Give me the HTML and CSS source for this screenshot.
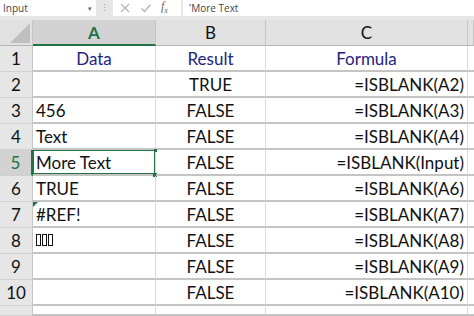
FILE: index.html
```html
<!DOCTYPE html>
<html lang="en">
<head>
  <meta charset="UTF-8">
  <meta name="viewport" content="width=device-width, initial-scale=1.0">
  <title>ISBLANK examples</title>
  <link rel="stylesheet" href="styles.css">
</head>
<body>
  <div class="formula-bar">
    <div class="name-box">
      <span>Input</span>
      <span class="caret">&#9662;</span>
    </div>
    <div class="grip">&#8942;</div>
    <div class="bar-buttons">
      <svg class="btn-icon" width="12" height="12" viewBox="0 0 12 12"><path d="M2 2 L10 10 M10 2 L2 10" stroke="#b3b3b3" stroke-width="1.2" fill="none"/></svg>
      <svg class="btn-icon" width="12" height="12" viewBox="0 0 12 12"><path d="M1.5 6.5 L4.5 9.5 L10.5 2.5" stroke="#b3b3b3" stroke-width="1.2" fill="none"/></svg>
      <span class="fx">f<sub>x</sub></span>
    </div>
    <div class="formula-input">'More Text</div>
  </div>

  <div class="sheet">
    <div class="corner"><span class="corner-tri"></span></div>
    <div class="col-head selected">A</div>
    <div class="col-head">B</div>
    <div class="col-head">C</div>
    <div class="col-head edge"></div>

    <div class="row-head">1</div>
    <div class="cell title">Data</div>
    <div class="cell title">Result</div>
    <div class="cell title">Formula</div>
    <div class="cell edge"></div>

    <div class="row-head">2</div>
    <div class="cell"></div>
    <div class="cell center">TRUE</div>
    <div class="cell right">=ISBLANK(A2)</div>
    <div class="cell edge"></div>

    <div class="row-head">3</div>
    <div class="cell">456</div>
    <div class="cell center">FALSE</div>
    <div class="cell right">=ISBLANK(A3)</div>
    <div class="cell edge"></div>

    <div class="row-head">4</div>
    <div class="cell">Text</div>
    <div class="cell center">FALSE</div>
    <div class="cell right">=ISBLANK(A4)</div>
    <div class="cell edge"></div>

    <div class="row-head selected">5</div>
    <div class="cell active">More Text<span class="handle top"></span><span class="handle"></span></div>
    <div class="cell center">FALSE</div>
    <div class="cell right">=ISBLANK(Input)</div>
    <div class="cell edge"></div>

    <div class="row-head">6</div>
    <div class="cell">TRUE</div>
    <div class="cell center">FALSE</div>
    <div class="cell right">=ISBLANK(A6)</div>
    <div class="cell edge"></div>

    <div class="row-head">7</div>
    <div class="cell flagged">#REF!</div>
    <div class="cell center">FALSE</div>
    <div class="cell right">=ISBLANK(A7)</div>
    <div class="cell edge"></div>

    <div class="row-head">8</div>
    <div class="cell"><span class="tofu"></span><span class="tofu"></span><span class="tofu"></span></div>
    <div class="cell center">FALSE</div>
    <div class="cell right">=ISBLANK(A8)</div>
    <div class="cell edge"></div>

    <div class="row-head">9</div>
    <div class="cell"></div>
    <div class="cell center">FALSE</div>
    <div class="cell right">=ISBLANK(A9)</div>
    <div class="cell edge"></div>

    <div class="row-head">10</div>
    <div class="cell"></div>
    <div class="cell center">FALSE</div>
    <div class="cell right">=ISBLANK(A10)</div>
    <div class="cell edge"></div>

    <div class="row-head"></div>
    <div class="cell"></div>
    <div class="cell"></div>
    <div class="cell"></div>
    <div class="cell edge"></div>
  </div>
</body>
</html>
```

FILE: styles.css
```css
* {
  box-sizing: border-box;
}

html,
body {
  height: 100%;
  overflow: hidden;
}

body {
  margin: 0;
  background-color: #e6e6e6;
  font-family: "Lato", "Liberation Sans", sans-serif;
  color: #111;
}

/* formula bar */
.formula-bar {
  display: flex;
  height: 16px;
  margin-bottom: 4px;
  font-family: "Open Sans", "Liberation Sans", sans-serif;
  font-size: 10px;
  color: #444;
}

.name-box {
  width: 96px;
  background-color: #fff;
  display: flex;
  align-items: center;
  justify-content: space-between;
  padding: 0 4px 0 3px;
}

.caret {
  font-size: 7px;
  color: #666;
}

.grip {
  width: 17px;
  text-align: center;
  line-height: 16px;
  color: #999;
  font-size: 9px;
}

.bar-buttons {
  width: 68px;
  background-color: #fff;
  display: flex;
  align-items: center;
  gap: 9px;
  padding-left: 6px;
}

.fx {
  font-family: "Liberation Serif", serif;
  font-style: italic;
  font-size: 12px;
  color: #666;
  line-height: 1;
}

.fx sub {
  font-size: 8px;
}

.formula-input {
  flex: 1;
  margin-left: 2px;
  background-color: #fff;
  padding-left: 6px;
  line-height: 16px;
}

/* grid */
.sheet {
  display: grid;
  grid-template-columns: 33px 123px 110px 202px 1fr;
  grid-template-rows: repeat(11, 26px) 10px;
  background-color: #fff;
  font-size: 17px;
}

.corner {
  position: relative;
  background-color: #e1e1e1;
  border-right: 1px solid #c6c6c6;
  border-bottom: 1px solid #b5b5b5;
}

.corner-tri {
  position: absolute;
  right: 2px;
  bottom: 2px;
  width: 0;
  height: 0;
  border-left: 20px solid transparent;
  border-bottom: 20px solid #c0c0c0;
}

.col-head {
  background-color: #e1e1e1;
  border-right: 1px solid #c6c6c6;
  border-bottom: 1px solid #b5b5b5;
  display: flex;
  align-items: center;
  justify-content: center;
  color: #111;
}

.col-head.selected {
  background-color: #d2d2d2;
  color: #217346;
  font-weight: bold;
  border-bottom: 2px solid #217346;
}

.row-head {
  background-color: #e6e6e6;
  border-right: 1px solid #c6c6c6;
  border-bottom: 1px solid #d0d0d0;
  display: flex;
  align-items: center;
  justify-content: center;
  color: #111;
}

.row-head.selected {
  background-color: #d2d2d2;
  color: #217346;
  border-right: 2px solid #217346;
}

.cell {
  position: relative;
  border-right: 1px solid #dadada;
  border-bottom: 2px solid #c4c4c4;
  display: flex;
  align-items: center;
  padding: 0 3px;
  white-space: nowrap;
}

.cell.edge {
  border-right: none;
}

.title {
  justify-content: center;
  color: #1f2380;
}

.center {
  justify-content: center;
}

.right {
  justify-content: flex-end;
}

.active {
  box-shadow: inset 0 0 0 1px #217346;
}

.handle {
  position: absolute;
  right: -2px;
  bottom: -3px;
  width: 4px;
  height: 4px;
  background-color: #217346;
}

.handle.top {
  top: -1px;
  bottom: auto;
  width: 3px;
  height: 3px;
}

.flagged::before {
  content: "";
  position: absolute;
  left: 0;
  top: 0;
  border-top: 5px solid #217346;
  border-right: 5px solid transparent;
}

.tofu {
  display: inline-block;
  width: 5px;
  height: 12px;
  border: 1.5px solid #111;
  margin-right: 1px;
}
```
